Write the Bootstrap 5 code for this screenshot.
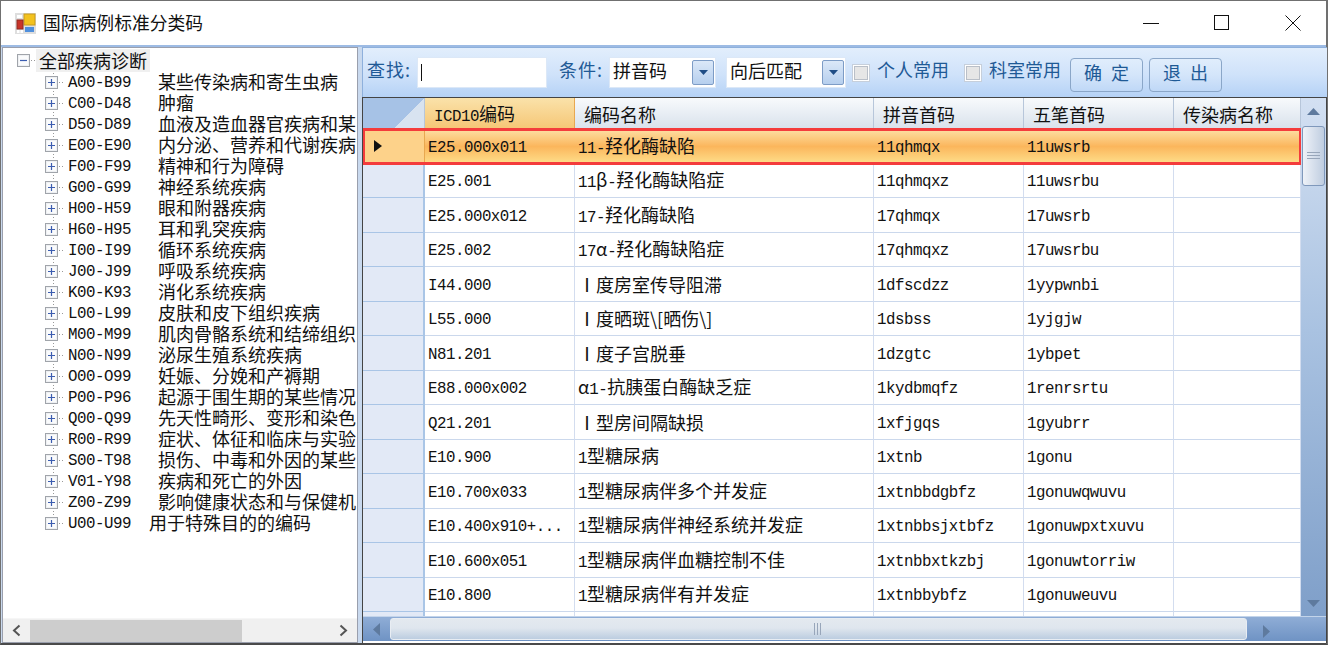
<!DOCTYPE html>
<html lang="zh">
<head>
<meta charset="utf-8">
<title>国际病例标准分类码</title>
<link href="https://cdn.jsdelivr.net/npm/bootstrap@5.3.0/dist/css/bootstrap.min.css" rel="stylesheet">
<style>
html,body{height:645px;overflow:hidden;background:#fff}
body{font-family:"Noto Sans CJK SC","Liberation Sans",sans-serif;font-size:18px;line-height:1.2;color:#111}
.lat{font-family:"Liberation Mono","Noto Sans CJK SC",monospace;font-size:15.8px;letter-spacing:-.5px}
.win-frame{height:645px;border:1px solid #6e6e6e;border-width:1px 2px 2px 1px;border-color:#707070 #707070 #4a4a4a #707070}
.title-row{height:44px;padding-left:14px}
.app-title{margin-left:7px;font-size:17.8px;white-space:nowrap}
.win-btns svg{display:block}
.win-btn{width:71px;height:44px;padding-left:4px}
.win-main{height:598px;background:#c9d9ee;border-top:2px solid #9dbbe4}
.tree-pane{width:356px;border:1px solid #9a9fad;background:#fff;margin-left:1px;flex:none}
.tree-view{height:568px;overflow:hidden;padding-top:1px}
.tree-line{height:21px;white-space:nowrap;padding-left:42px;line-height:19px;background:radial-gradient(circle,#999 .6px,transparent .8px) 48.5px 0/3px 3px repeat-y}
.tree-line>svg{flex:none;margin-right:-1px}
.tree-line>span{padding-bottom:2px}
.tree-line>span.tree-code{padding-bottom:0;padding-top:2px}
.tree-root{height:23px;padding-left:14px;background:none}
.tree-root>svg{margin-right:-5px}
.tree-line>span.root-text{background:#f0f0f0;padding:0 3px;line-height:23px}
.tree-code{width:90px;flex:none}
.tree-end{background:radial-gradient(circle,#999 .6px,transparent .8px) 48.5px 0/3px 3px no-repeat}
.tree-wide{margin-left:-9px}
.tree-hbar{height:24px;background:#f0f0f0;border-top:1px solid #f6f6f6}
.tree-hbar b{width:27px;display:flex;justify-content:center;align-items:center;flex:none}
.tree-thumb{width:212px;height:22px;background:#cdcdcd}
.grid-pane{width:965px;margin-left:4px;flex:none}
.tool-row{height:50px;padding:0 0 5px 4px;border-top:1px solid #8eb0dc;border-left:1px solid #8eb0dc;background:linear-gradient(#e2eefc,#cfe2fa 55%,#b5d2f6);color:#1f5a96}
.tool-label{white-space:nowrap;letter-spacing:1px;flex:none}
.label-find{width:50px}
.label-check{width:72px;letter-spacing:0}
.tool-field{background:#fff;border:1px solid #dce8f7;height:31px;line-height:29px;padding-left:3px;color:#111;white-space:nowrap;flex:none;margin-top:4px}
.field-text{padding-bottom:3px}
.find-box{width:130px;margin-right:12px}
.caret-mark{display:inline-block;width:1px;height:17px;background:#111;vertical-align:-1px}
.combo-a{width:107px;margin-right:10px}
.combo-b{width:120px;margin-right:6px}
.drop-btn{width:22px;height:25px;margin-right:1px;background:linear-gradient(#dbe8f8,#b6cfee);border:1px solid #7d9cc6;border-radius:2px}
.fake-check{width:18px;height:18px;border:1px solid #c6cfdb;background:#e6e6e6;box-shadow:inset 0 0 0 1px #fff,inset 0 0 0 2px #b9bfc8;flex:none;margin-top:6px}
.check-a{margin-right:7px}
.check-b{margin-left:15px;margin-right:7px}
.btn-tool{--bs-btn-padding-x:0;--bs-btn-padding-y:0;width:73px;height:34px;margin-top:9px;padding-bottom:5px;border:1px solid #8aa6c8;border-radius:4px;background:linear-gradient(#e0edfc,#d4e5fa 50%,#bfd8f7);color:#1f5a96;font-size:18px;line-height:24px;word-spacing:5px;white-space:pre;flex:none}
.btn-first{margin-left:9px;margin-right:6px}
.data-area{height:546px;width:965px;border:1px solid #444;border-width:1px 1px 0 1px;background:#fff}
.data-top{height:518px}
.data-clip{width:938px;height:518px;overflow:hidden;flex:none}
.data-table{--bs-table-bg:transparent;table-layout:fixed;width:938px;margin:0;border-collapse:separate;border-spacing:0;color:#111}
.data-table th,.data-table td{padding:2px 0 0 3px;white-space:nowrap;vertical-align:middle;border:0;border-right:1px solid #d3ddef;border-bottom:1px solid #cbd8ec;font-weight:400;box-shadow:none}
.data-table td.lat{padding-top:5px}
.data-table thead th{height:31px;padding:4px 0 0 9px;background:linear-gradient(#f8fafc,#d9e2ec);border-right:1px solid #b7c6da;border-bottom:1px solid #a5bcd8}
.data-table thead th.corner{padding:0;background:#a6c2e6 linear-gradient(135deg,transparent 68%,#d8e3f0 68%) 0 0/100% 100% no-repeat}
.data-table thead th.hot{background:linear-gradient(#fae2aa,#f6c777);border-right-color:#e8a850}
.data-table tbody tr{height:34.5px}
.data-table tbody th,.data-table tbody td{height:34.5px}
.data-table tbody th{background:#e2e9f6;padding:0;border-right:2px solid #a9c5e6;border-bottom:1px solid #a9c5e6}
.data-table tbody tr.picked{outline:3px solid #f43c3c;outline-offset:-2px}
.data-table tbody tr.picked td{background:linear-gradient(#fde0a6,#fbb65c 50%,#fee08c);border-right:0;border-bottom:0}
.data-table tbody tr.picked th{background:#fdd28a;border-right:1px solid #e8a850;border-bottom:0}
.mark-arrow{display:block;margin-left:11px}
.vbar{width:25px;height:518px;background:linear-gradient(#d3e0f2,#a9c2e1 45%,#7f9fc9);flex:none}
.v-thumb{height:60px;margin:2px 1px 0;width:23px;background:linear-gradient(90deg,#eef2f8,#bfcde0);border:1px solid #7f98bb;border-radius:3px}
.v-end{height:26px}
.hbar{height:25px;background:linear-gradient(#8fadd6,#6f93c4);border-top:1px solid #c3d4ea}
.h-end{width:27px;flex:none}
.h-thumb{width:857px;height:22px;background:linear-gradient(#e3e9ef,#dfe6ee 45%,#bccde0);border:1px solid #e8edf3;border-radius:3px;flex:none}
.h-tail{width:54px;flex:none;padding-left:16px}
</style>
</head>
<body class="m-0">
<svg width="0" height="0" class="d-block position-fixed">
<symbol id="node-plus" viewBox="0 0 24 13"><rect x=".5" y=".5" width="12" height="12" fill="#eef0f3" stroke="#a0a4aa"/><rect x="2" y="2" width="9" height="9" fill="#fafbfc"/><path d="M3 6.500h7M6.500 3v7" stroke="#3c5db0" stroke-width="1.200"/><path d="M14 6.500h1M17 6.500h1" stroke="#999"/></symbol>
<symbol id="node-minus" viewBox="0 0 24 13"><rect x=".5" y=".5" width="12" height="12" fill="#eef0f3" stroke="#a0a4aa"/><rect x="2" y="2" width="9" height="9" fill="#fafbfc"/><path d="M3 6.500h7" stroke="#3c5db0" stroke-width="1.200"/><path d="M14 6.500h1M17 6.500h1" stroke="#999"/></symbol>
</svg>
<div class="win-frame d-flex flex-column">
  <div class="title-row d-flex align-items-center">
    <svg width="21" height="21" viewBox="0 0 21 21" aria-hidden="true"><rect width="21" height="21" fill="#dedede"/><rect x="9" y="1" width="11" height="11" fill="#f3c21e" stroke="#c79a1e"/><rect x="2" y="7" width="6" height="9" fill="#c8342a" stroke="#8f2a22"/><rect x="10" y="14" width="9" height="5" fill="#4f8fdc"/><rect x="2" y="2" width="5" height="3" fill="#fff"/><rect x="2" y="17" width="2.500" height="3" fill="#fff"/><rect x="5.500" y="17" width="2.500" height="3" fill="#fff"/></svg>
    <span class="app-title">国际病例标准分类码</span>
    <div class="win-btns d-flex ms-auto">
      <div class="win-btn d-flex align-items-center justify-content-center"><svg width="16" height="16" viewBox="0 0 16 16"><path d="M0 8.500h16" stroke="#111"/></svg></div>
      <div class="win-btn d-flex align-items-center justify-content-center"><svg width="16" height="16" viewBox="0 0 16 16"><rect x=".5" y=".5" width="14" height="14" fill="none" stroke="#111"/></svg></div>
      <div class="win-btn d-flex align-items-center justify-content-center"><svg width="16" height="16" viewBox="0 0 16 16"><path d="M.5.5l15 15M15.500.5l-15 15" stroke="#111"/></svg></div>
    </div>
  </div>
  <div class="win-main d-flex">
    <div class="tree-pane d-flex flex-column">
      <div class="tree-view flex-grow-1">
        <div class="tree-line tree-root d-flex align-items-center"><svg width="24" height="13"><use href="#node-minus"/></svg><span class="root-text">全部疾病诊断</span></div>
        <div class="tree-line d-flex align-items-center"><svg width="24" height="13"><use href="#node-plus"/></svg><span class="lat tree-code">A00-B99</span><span>某些传染病和寄生虫病</span></div>
        <div class="tree-line d-flex align-items-center"><svg width="24" height="13"><use href="#node-plus"/></svg><span class="lat tree-code">C00-D48</span><span>肿瘤</span></div>
        <div class="tree-line d-flex align-items-center"><svg width="24" height="13"><use href="#node-plus"/></svg><span class="lat tree-code">D50-D89</span><span>血液及造血器官疾病和某</span></div>
        <div class="tree-line d-flex align-items-center"><svg width="24" height="13"><use href="#node-plus"/></svg><span class="lat tree-code">E00-E90</span><span>内分泌、营养和代谢疾病</span></div>
        <div class="tree-line d-flex align-items-center"><svg width="24" height="13"><use href="#node-plus"/></svg><span class="lat tree-code">F00-F99</span><span>精神和行为障碍</span></div>
        <div class="tree-line d-flex align-items-center"><svg width="24" height="13"><use href="#node-plus"/></svg><span class="lat tree-code">G00-G99</span><span>神经系统疾病</span></div>
        <div class="tree-line d-flex align-items-center"><svg width="24" height="13"><use href="#node-plus"/></svg><span class="lat tree-code">H00-H59</span><span>眼和附器疾病</span></div>
        <div class="tree-line d-flex align-items-center"><svg width="24" height="13"><use href="#node-plus"/></svg><span class="lat tree-code">H60-H95</span><span>耳和乳突疾病</span></div>
        <div class="tree-line d-flex align-items-center"><svg width="24" height="13"><use href="#node-plus"/></svg><span class="lat tree-code">I00-I99</span><span>循环系统疾病</span></div>
        <div class="tree-line d-flex align-items-center"><svg width="24" height="13"><use href="#node-plus"/></svg><span class="lat tree-code">J00-J99</span><span>呼吸系统疾病</span></div>
        <div class="tree-line d-flex align-items-center"><svg width="24" height="13"><use href="#node-plus"/></svg><span class="lat tree-code">K00-K93</span><span>消化系统疾病</span></div>
        <div class="tree-line d-flex align-items-center"><svg width="24" height="13"><use href="#node-plus"/></svg><span class="lat tree-code">L00-L99</span><span>皮肤和皮下组织疾病</span></div>
        <div class="tree-line d-flex align-items-center"><svg width="24" height="13"><use href="#node-plus"/></svg><span class="lat tree-code">M00-M99</span><span>肌肉骨骼系统和结缔组织</span></div>
        <div class="tree-line d-flex align-items-center"><svg width="24" height="13"><use href="#node-plus"/></svg><span class="lat tree-code">N00-N99</span><span>泌尿生殖系统疾病</span></div>
        <div class="tree-line d-flex align-items-center"><svg width="24" height="13"><use href="#node-plus"/></svg><span class="lat tree-code">O00-O99</span><span>妊娠、分娩和产褥期</span></div>
        <div class="tree-line d-flex align-items-center"><svg width="24" height="13"><use href="#node-plus"/></svg><span class="lat tree-code">P00-P96</span><span>起源于围生期的某些情况</span></div>
        <div class="tree-line d-flex align-items-center"><svg width="24" height="13"><use href="#node-plus"/></svg><span class="lat tree-code">Q00-Q99</span><span>先天性畸形、变形和染色</span></div>
        <div class="tree-line d-flex align-items-center"><svg width="24" height="13"><use href="#node-plus"/></svg><span class="lat tree-code">R00-R99</span><span>症状、体征和临床与实验</span></div>
        <div class="tree-line d-flex align-items-center"><svg width="24" height="13"><use href="#node-plus"/></svg><span class="lat tree-code">S00-T98</span><span>损伤、中毒和外因的某些</span></div>
        <div class="tree-line d-flex align-items-center"><svg width="24" height="13"><use href="#node-plus"/></svg><span class="lat tree-code">V01-Y98</span><span>疾病和死亡的外因</span></div>
        <div class="tree-line d-flex align-items-center"><svg width="24" height="13"><use href="#node-plus"/></svg><span class="lat tree-code">Z00-Z99</span><span>影响健康状态和与保健机</span></div>
        <div class="tree-line tree-end d-flex align-items-center"><svg width="24" height="13"><use href="#node-plus"/></svg><span class="lat tree-code">U00-U99</span><span class="tree-wide">用于特殊目的的编码</span></div>
      </div>
      <div class="tree-hbar d-flex align-items-center">
        <b><svg width="11" height="13" viewBox="0 0 11 13"><path d="M8.500 1.500L3 6.500l5.500 5" fill="none" stroke="#555" stroke-width="2"/></svg></b>
        <div class="tree-thumb"></div>
        <b class="ms-auto"><svg width="11" height="13" viewBox="0 0 11 13"><path d="M2.500 1.500L8 6.500l-5.500 5" fill="none" stroke="#555" stroke-width="2"/></svg></b>
      </div>
    </div>
    <div class="grid-pane d-flex flex-column">
      <div class="tool-row d-flex align-items-center">
        <span class="tool-label label-find">查找:</span>
        <div class="tool-field find-box"><span class="caret-mark"></span></div>
        <span class="tool-label label-find">条件:</span>
        <div class="tool-field combo-a d-flex align-items-center justify-content-between"><span class="field-text">拼音码</span><span class="drop-btn d-flex align-items-center justify-content-center"><svg width="9" height="5" viewBox="0 0 9 5"><path d="M0 0h9L4.500 5z" fill="#1f4d86"/></svg></span></div>
        <div class="tool-field combo-b d-flex align-items-center justify-content-between"><span class="field-text">向后匹配</span><span class="drop-btn d-flex align-items-center justify-content-center"><svg width="9" height="5" viewBox="0 0 9 5"><path d="M0 0h9L4.500 5z" fill="#1f4d86"/></svg></span></div>
        <span class="fake-check check-a"></span><span class="tool-label label-check">个人常用</span>
        <span class="fake-check check-b"></span><span class="tool-label label-check">科室常用</span>
        <button type="button" class="btn btn-tool btn-first">确 定</button>
        <button type="button" class="btn btn-tool">退 出</button>
      </div>
      <div class="data-area d-flex flex-column">
        <div class="data-top d-flex">
          <div class="data-clip">
            <table class="table data-table">
              <colgroup><col style="width:62px"><col style="width:150px"><col style="width:299px"><col style="width:150px"><col style="width:150px"><col style="width:127px"></colgroup>
              <thead><tr><th class="corner"></th><th class="hot"><span class="lat">ICD10</span>编码</th><th>编码名称</th><th>拼音首码</th><th>五笔首码</th><th>传染病名称</th></tr></thead>
              <tbody>
                <tr class="picked"><th><svg class="mark-arrow" width="8" height="12" viewBox="0 0 8 12"><path d="M0 0l8 6-8 6z" fill="#111"/></svg></th><td class="lat">E25.000x011</td><td><span class="lat">11-</span>羟化酶缺陷</td><td class="lat">11qhmqx</td><td class="lat">11uwsrb</td><td></td></tr>
                <tr><th></th><td class="lat">E25.001</td><td><span class="lat">11</span>β<span class="lat">-</span>羟化酶缺陷症</td><td class="lat">11qhmqxz</td><td class="lat">11uwsrbu</td><td></td></tr>
                <tr><th></th><td class="lat">E25.000x012</td><td><span class="lat">17-</span>羟化酶缺陷</td><td class="lat">17qhmqx</td><td class="lat">17uwsrb</td><td></td></tr>
                <tr><th></th><td class="lat">E25.002</td><td><span class="lat">17</span>α<span class="lat">-</span>羟化酶缺陷症</td><td class="lat">17qhmqxz</td><td class="lat">17uwsrbu</td><td></td></tr>
                <tr><th></th><td class="lat">I44.000</td><td>Ⅰ度房室传导阻滞</td><td class="lat">1dfscdzz</td><td class="lat">1yypwnbi</td><td></td></tr>
                <tr><th></th><td class="lat">L55.000</td><td>Ⅰ度晒斑\[晒伤\]</td><td class="lat">1dsbss</td><td class="lat">1yjgjw</td><td></td></tr>
                <tr><th></th><td class="lat">N81.201</td><td>Ⅰ度子宫脱垂</td><td class="lat">1dzgtc</td><td class="lat">1ybpet</td><td></td></tr>
                <tr><th></th><td class="lat">E88.000x002</td><td>α<span class="lat">1-</span>抗胰蛋白酶缺乏症</td><td class="lat">1kydbmqfz</td><td class="lat">1renrsrtu</td><td></td></tr>
                <tr><th></th><td class="lat">Q21.201</td><td>Ⅰ型房间隔缺损</td><td class="lat">1xfjgqs</td><td class="lat">1gyubrr</td><td></td></tr>
                <tr><th></th><td class="lat">E10.900</td><td><span class="lat">1</span>型糖尿病</td><td class="lat">1xtnb</td><td class="lat">1gonu</td><td></td></tr>
                <tr><th></th><td class="lat">E10.700x033</td><td><span class="lat">1</span>型糖尿病伴多个并发症</td><td class="lat">1xtnbbdgbfz</td><td class="lat">1gonuwqwuvu</td><td></td></tr>
                <tr><th></th><td class="lat">E10.400x910+...</td><td><span class="lat">1</span>型糖尿病伴神经系统并发症</td><td class="lat">1xtnbbsjxtbfz</td><td class="lat">1gonuwpxtxuvu</td><td></td></tr>
                <tr><th></th><td class="lat">E10.600x051</td><td><span class="lat">1</span>型糖尿病伴血糖控制不佳</td><td class="lat">1xtnbbxtkzbj</td><td class="lat">1gonuwtorriw</td><td></td></tr>
                <tr><th></th><td class="lat">E10.800</td><td><span class="lat">1</span>型糖尿病伴有并发症</td><td class="lat">1xtnbbybfz</td><td class="lat">1gonuweuvu</td><td></td></tr>
                <tr><th></th><td></td><td></td><td></td><td></td><td></td></tr>
              </tbody>
            </table>
          </div>
          <div class="vbar d-flex flex-column">
            <div class="v-end d-flex align-items-center justify-content-center"><svg width="13" height="7" viewBox="0 0 13 7"><path d="M6.500 0L13 7H0z" fill="#5e7a9e"/></svg></div>
            <div class="v-thumb d-flex align-items-center justify-content-center"><svg width="13" height="9" viewBox="0 0 13 9"><path d="M0 .5h13M0 3.500h13M0 6.500h13" stroke="#98a6ba"/></svg></div>
            <div class="v-end d-flex align-items-center justify-content-center mt-auto"><svg width="13" height="7" viewBox="0 0 13 7"><path d="M0 0h13L6.500 7z" fill="#5e7a9e"/></svg></div>
          </div>
        </div>
        <div class="hbar d-flex align-items-center">
          <div class="h-end d-flex align-items-center justify-content-center"><svg width="7" height="13" viewBox="0 0 7 13"><path d="M7 0v13L0 6.500z" fill="#5e7a9e"/></svg></div>
          <div class="h-thumb d-flex align-items-center justify-content-center"><svg width="9" height="12" viewBox="0 0 9 12"><path d="M.5 0v12M3.500 0v12M6.500 0v12" stroke="#98a6ba"/></svg></div>
          <div class="h-tail"><svg width="7" height="13" viewBox="0 0 7 13"><path d="M0 0v13l7-6.500z" fill="#5e7a9e"/></svg></div>
        </div>
      </div>
    </div>
  </div>
</div>
</body>
</html>
